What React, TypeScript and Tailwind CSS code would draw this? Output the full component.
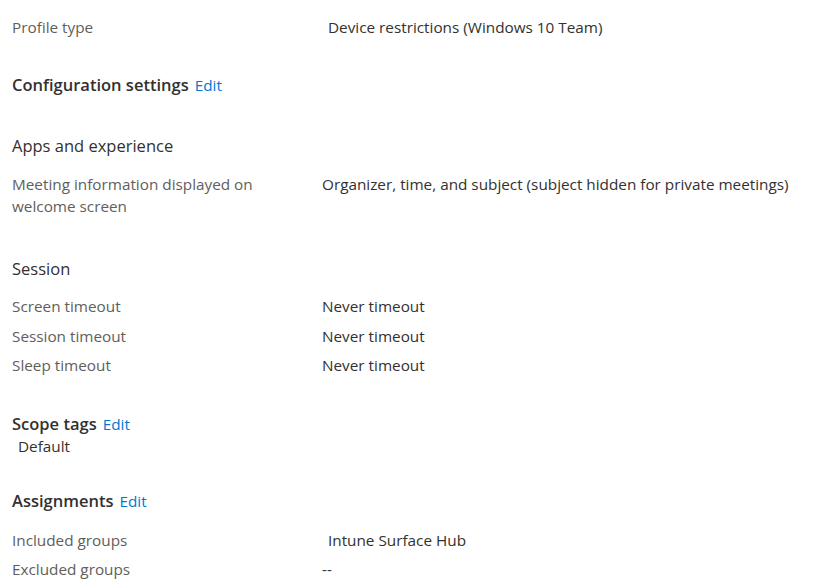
import type { ReactNode } from 'react';

const FONT = "font-['Segoe_UI','Open_Sans',sans-serif]";
const LABEL = 'text-[#605e5c]';
const VALUE = 'text-[#323130]';

function Row({ label, value, valuePad = false, className = '' }: { label: ReactNode; value: ReactNode; valuePad?: boolean; className?: string }) {
  return (
    <div className={`flex text-[15.3px] leading-[20px] ${className}`}>
      <div className={`w-[310px] shrink-0 ${LABEL}`}>{label}</div>
      <div className={`${VALUE} ${valuePad ? 'pl-[6px]' : ''}`}>{value}</div>
    </div>
  );
}

function Heading({ title, edit, className = '' }: { title: string; edit?: boolean; className?: string }) {
  return (
    <div className={`flex items-baseline gap-[6px] leading-[22px] ${className}`}>
      <span className={`text-[16.5px] ${edit ? 'font-semibold' : ''} ${VALUE}`}>{title}</span>
      {edit && <a className="text-[15.3px] text-[#0078d4]">Edit</a>}
    </div>
  );
}

export default function App() {
  return (
    <div className={`min-h-screen w-[836px] bg-white pl-[12px] pt-[17px] ${FONT}`}>
      <Row label="Profile type" value="Device restrictions (Windows 10 Team)" valuePad />

      <Heading title="Configuration settings" edit className="mt-[37px]" />

      <Heading title="Apps and experience" className="mt-[39px]" />
      <div className="mt-[16px] flex text-[15.3px] leading-[22px]">
        <div className={`w-[310px] shrink-0 ${LABEL}`}>
          Meeting information displayed on
          <br />
          welcome screen
        </div>
        <div className={VALUE}>Organizer, time, and subject (subject hidden for private meetings)</div>
      </div>

      <Heading title="Session" className="mt-[41px]" />
      <div className="mt-[16px] flex flex-col gap-[9.5px]">
        <Row label="Screen timeout" value="Never timeout" />
        <Row label="Session timeout" value="Never timeout" />
        <Row label="Sleep timeout" value="Never timeout" />
      </div>

      <Heading title="Scope tags" edit className="mt-[38px]" />
      <div className={`mt-[1px] pl-[6px] text-[15.3px] leading-[20px] ${VALUE}`}>Default</div>

      <Heading title="Assignments" edit className="mt-[34px]" />
      <div className="mt-[18px] flex flex-col gap-[9px]">
        <Row label="Included groups" value="Intune Surface Hub" valuePad />
        <Row label="Excluded groups" value="--" />
      </div>
    </div>
  );
}
